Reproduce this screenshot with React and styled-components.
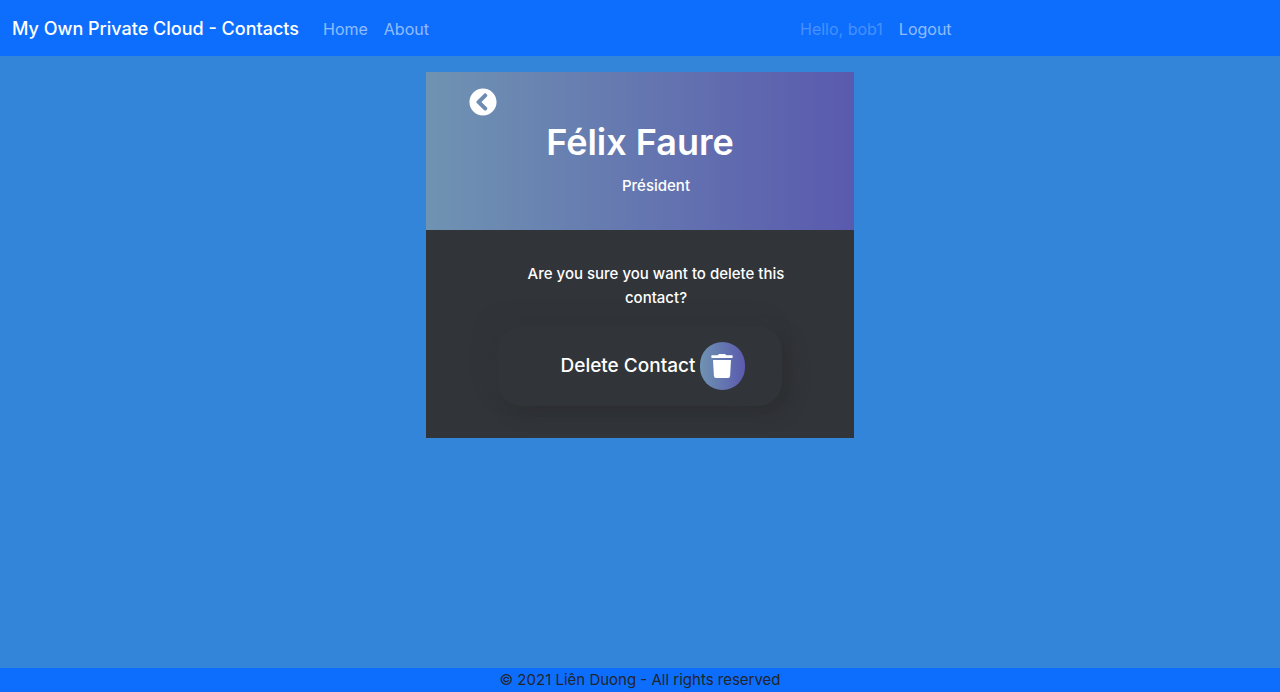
import React from "react";
import styled, { createGlobalStyle } from "styled-components";
import { FaChevronCircleLeft } from "react-icons/fa";

const accent = "linear-gradient(to right, #6f93b2, #5a5aae)";

const GlobalStyle = createGlobalStyle`
  *, *::before, *::after { box-sizing: border-box; }
  body {
    margin: 0;
    font: 400 16px/24px Inter, "Liberation Sans", sans-serif;
    color: #212529;
    background: #3385da;
  }
  h1, p { margin: 0; }
`;

const Page = styled.div`
  min-height: 100vh;
  display: flex;
  flex-direction: column;
`;

const Navbar = styled.nav`
  display: flex;
  align-items: center;
  min-height: 56px;
  padding-top: 2px;
  background: #0d6efd;
`;

const NavGroup = styled.div`
  display: flex;
  align-items: center;
  flex: ${({ $share }) => $share} 1 0;
  gap: 16px;
`;

const Brand = styled.a`
  padding-left: 12px;
  margin-right: 8px;
  font-size: 18px;
  font-weight: 500;
  line-height: 30px;
  color: #fff;
  text-decoration: none;
`;

const NavLink = styled.a`
  color: rgba(255, 255, 255, 0.55);
  text-decoration: none;
`;

const Greeting = styled.span`
  color: rgba(255, 255, 255, 0.25);
`;

const Main = styled.main`
  flex: 1;
  padding: 16px 0;
`;

const Card = styled.section`
  width: 33.4%;
  min-width: 320px;
  margin: 0 auto;
  color: #fff;
  background: #313439;
`;

const CardHeader = styled.header`
  padding: 16px 32px 32px;
  text-align: center;
  background: ${accent};
`;

const BackLink = styled.a`
  display: block;
  width: 50px;
  height: 30px;
  color: #fff;
  padding-left: 11px;

  svg { display: block; width: 28px; height: 28px; }
`;

const Name = styled.h1`
  font-size: 36px;
  font-weight: 600;
  line-height: 48px;
  margin-bottom: 8px;
`;

const Role = styled.p`
  padding-left: 32px;
  font-size: 15px;
  font-weight: 500;
`;

const CardBody = styled.div`
  padding: 32px 64px;
`;

const Question = styled.p`
  padding-left: 32px;
  margin-bottom: 16px;
  text-align: center;
  font-size: 15px;
  font-weight: 500;
`;

const DeleteRow = styled.div`
  display: flex;
  align-items: center;
  justify-content: center;
  gap: 5px;
  margin: 0 8px;
  padding: 16px 0 16px 26px;
  border-radius: 24px;
  background: #313439;
  box-shadow: -8px -8px 16px #313437, 8px 8px 16px #2d2f32;
`;

const DeleteLabel = styled.label`
  font-size: 19px;
  font-weight: 500;
  line-height: 30px;
`;

const DeleteButton = styled.button`
  display: flex;
  align-items: center;
  justify-content: center;
  width: 45px;
  height: 48px;
  padding: 0;
  border: 0;
  border-radius: 24px;
  color: #fff;
  background: ${accent};
  cursor: pointer;
`;

const Footer = styled.footer`
  text-align: center;
  background: #0d6efd;
  font-size: 15px;
`;

const TrashIcon = () => (
  <svg width="23" height="24" viewBox="0 0 23 24" fill="currentColor" aria-hidden="true">
    <path d="M1 1.2h5.8L7.3.5Q7.6 0 8.3 0h5.4q.7 0 1 .5l.5.7H21q.7 0 .7.7v1.2q0 .9-.7.9H1q-.7 0-.7-.9V1.900q0-.7.7-.7z" />
    <path d="M2 6h18l-.9 15.800Q19 24 17 24H5Q3 24 2.900 21.800z" />
  </svg>
);

export default function App() {
  return (
    <Page>
      <GlobalStyle />
      <Navbar>
        <NavGroup $share={5}>
          <Brand href="#">My Own Private Cloud - Contacts</Brand>
          <NavLink href="#">Home</NavLink>
          <NavLink href="#">About</NavLink>
        </NavGroup>
        <NavGroup $share={3}>
          <Greeting>Hello, bob1</Greeting>
          <NavLink href="#">Logout</NavLink>
        </NavGroup>
      </Navbar>
      <Main>
        <Card>
          <CardHeader>
            <BackLink href="#" aria-label="Back"><FaChevronCircleLeft /></BackLink>
            <Name>Félix Faure</Name>
            <Role>Président</Role>
          </CardHeader>
          <CardBody>
            <Question>Are you sure you want to delete this contact?</Question>
            <DeleteRow>
              <DeleteLabel htmlFor="delete">Delete Contact</DeleteLabel>
              <DeleteButton id="delete" type="button"><TrashIcon /></DeleteButton>
            </DeleteRow>
          </CardBody>
        </Card>
      </Main>
      <Footer>© 2021 Liên Duong - All rights reserved</Footer>
    </Page>
  );
}
